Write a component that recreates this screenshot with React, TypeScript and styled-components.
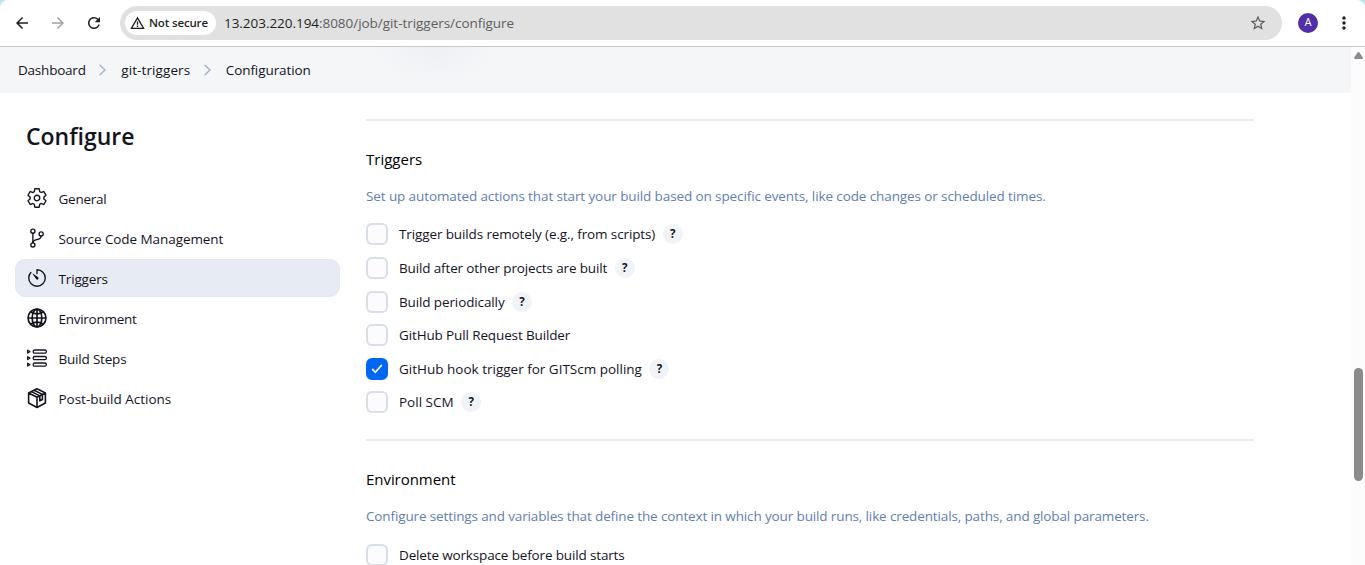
import React from "react";
import styled, { createGlobalStyle } from "styled-components";
import { IoSettingsOutline, IoGitBranchOutline, IoTimerOutline, IoGlobeOutline } from "react-icons/io5";
import { MdArrowBack, MdArrowForward, MdRefresh, MdStarBorder, MdMoreVert } from "react-icons/md";

const GlobalStyle = createGlobalStyle`
  * { box-sizing: border-box; }
  html, body, #root { margin: 0; height: 100%; }
  body { background: #fff; overflow: hidden; color: #14141f; font: 13.5px/20px "Open Sans", "Noto Sans", sans-serif; }
  svg { display: block; flex: none; }
  h1, h2, p { margin: 0; font-weight: 400; }
`;

/* Text run with its tracking in px */
const T = styled.span<{ $ls?: number }>`
  white-space: nowrap;
  letter-spacing: ${(p) => p.$ls ?? 0}px;
`;

const Window = styled.div`
  height: 565px;
  display: flex;
  flex-direction: column;
  background: #b9e6f0;
`;
const Toolbar = styled.header`
  flex: none;
  height: 47px;
  display: flex;
  align-items: center;
  padding: 0 11px 0 13px;
  background: #fff;
  border-bottom: 1px solid #c9c9c9;
  border-radius: 8px 8px 0 0;
`;
const NavButton = styled.span<{ $muted?: boolean }>`
  display: flex;
  width: 18px;
  margin-right: 18px;
  color: ${(p) => (p.$muted ? "#a3a3a3" : "#1f1f1f")};
`;
const AddressBar = styled.div`
  flex: 1;
  height: 34px;
  margin-left: -1px;
  padding: 0 15px 0 5px;
  display: flex;
  align-items: center;
  border-radius: 17px;
  background: #e1e1e1;
`;
const SecurityChip = styled.div`
  width: 91px;
  height: 24px;
  padding-left: 5px;
  display: flex;
  align-items: center;
  gap: 4px;
  border-radius: 12px;
  background: #fff;
  color: #1f1f1f;
  font-size: 11.5px;
  font-weight: 600;
`;
const Url = styled.div`
  flex: 1;
  margin-left: 8px;
  color: #5e5e5e;
`;
const Host = styled.span`
  color: #1f1f1f;
`;
const Avatar = styled.div`
  width: 20px;
  height: 20px;
  margin: 0 16px;
  border-radius: 50%;
  background: #512da8;
  color: #fff;
  font: 11px/20px Roboto, sans-serif;
  text-align: center;
`;
const Viewport = styled.div`
  flex: 1;
  min-height: 0;
  display: flex;
  background: #fff;
`;
const Page = styled.div`
  flex: 1;
  display: flex;
  flex-direction: column;
  min-width: 0;
`;
const Breadcrumbs = styled.nav`
  flex: none;
  height: 46px;
  padding: 0 0 1px 18px;
  display: flex;
  align-items: center;
  background: radial-gradient(ellipse 62px 38px at 435px 0, #eff0f4, rgba(239, 240, 244, 0)), #f5f6f8;
`;
const Chevron = styled.svg`
  width: 7px;
  height: 12px;
  margin: 1px 15px 0 13.5px;
`;
const Columns = styled.div`
  flex: 1;
  min-height: 0;
  display: flex;
`;
const Sidebar = styled.aside`
  width: 366px;
  padding: 25px 26px 0 15px;
`;
const Title = styled.h1`
  margin: 0 0 25px 11px;
  font: 600 23px/36px "Open Sans", "Noto Sans", sans-serif;
`;
const NavItem = styled.a<{ $active?: boolean }>`
  display: flex;
  align-items: center;
  height: 38px;
  width: 325px;
  margin-bottom: 2px;
  padding: 1px 0 0 10px;
  gap: 10.5px;
  border-radius: 10px;
  border: 1px solid ${(p) => (p.$active ? "#e4e8f1" : "transparent")};
  background: ${(p) => (p.$active ? "#e7ebf4" : "transparent")};
  & > svg { width: 22px; height: 22px; margin-top: -2px; }
`;
const BoldGlobe = styled(IoGlobeOutline)`
  path { stroke-width: 40px; }
`;
const Main = styled.main`
  width: 888px;
  padding-top: 26px;
  overflow: hidden;
`;
const Section = styled.section`
  height: 320px;
  padding-top: 26px;
  border-top: 2px solid #e8ecf2;
`;
const SectionTitle = styled.h2`
  font-size: 15px;
  line-height: 24px;
  color: #000;
`;
const Description = styled.p<{ $after?: number }>`
  margin: 15px 0 ${(p) => p.$after ?? 17}px;
  line-height: 20px;
  color: #6180b0;
`;
const Option = styled.label<{ $gap: number }>`
  display: flex;
  align-items: center;
  height: 22px;
  margin-bottom: ${(p) => p.$gap}px;
`;
const Box = styled.span<{ $checked?: boolean }>`
  width: 22px;
  height: 22px;
  margin-right: 11px;
  display: flex;
  align-items: center;
  justify-content: center;
  border-radius: 6px;
  border: 2px solid ${(p) => (p.$checked ? "#0067f5" : "#d8deea")};
  background: ${(p) => (p.$checked ? "#0067f5" : "#fcfcfe")};
`;
const Help = styled.span`
  width: 20px;
  height: 20px;
  margin-left: 7.5px;
  border-radius: 50%;
  background: #f0f4f8;
  font: 700 11.5px/19px "Open Sans", sans-serif;
  text-align: center;
`;
const ScrollTrack = styled.div`
  width: 14px;
  padding: 5px 0 0 3px;
  background: #fcfcfc;
`;
const ScrollThumb = styled.div`
  width: 9px;
  height: 113px;
  margin-top: 309px;
  border-radius: 5px;
  background: #8b8b8b;
`;

const Separator = () => (
  <Chevron viewBox="0 0 7 12" fill="none" stroke="#9bb0d3" strokeWidth="1.4" strokeLinecap="round" strokeLinejoin="round">
    <path d="M1 1.2 6 6 1 10.8" />
  </Chevron>
);

const StepsIcon = () => (
  <svg viewBox="0 0 22 22" fill="none" stroke="currentColor" strokeWidth="1.3" strokeLinejoin="round">
    {[4.6, 11.1, 17.6].map((y) => (
      <g key={y}>
        <path d={`M1.6 ${y - 1.4} 3.9 ${y} 1.6 ${y + 1.4}Z`} />
        <rect x="7.2" y={y - 1.6} width="13.2" height="3.2" rx="1.5" />
      </g>
    ))}
  </svg>
);

const PackageIcon = () => (
  <svg viewBox="0 0 22 22" fill="none" stroke="currentColor" strokeWidth="1.6" strokeLinejoin="round" strokeLinecap="round">
    <path d="M11 1.8 19.4 6v10L11 20.5 2.6 16V6ZM2.6 6 11 10.2 19.4 6M11 10.2v10.3" />
    <path d="m5.4 4.6 8.4 4.3v5l2.6-1.4V7.4L8.1 3.3" />
  </svg>
);

const navItems = [
  { label: "General", ls: -0.25, icon: <IoSettingsOutline /> },
  { label: "Source Code Management", ls: -0.07, icon: <IoGitBranchOutline /> },
  { label: "Triggers", ls: -0.15, icon: <IoTimerOutline />, active: true },
  { label: "Environment", ls: -0.27, icon: <BoldGlobe /> },
  { label: "Build Steps", ls: -0.2, icon: <StepsIcon /> },
  { label: "Post-build Actions", ls: -0.02, icon: <PackageIcon /> },
];

type Opt = { label: string; ls: number; help?: boolean; checked?: boolean; gap: number };
const triggers: Opt[] = [
  { label: "Trigger builds remotely (e.g., from scripts)", ls: -0.12, help: true, gap: 12 },
  { label: "Build after other projects are built", ls: -0.14, help: true, gap: 12 },
  { label: "Build periodically", ls: -0.12, help: true, gap: 11 },
  { label: "GitHub Pull Request Builder", ls: -0.13, gap: 12 },
  { label: "GitHub hook trigger for GITScm polling", ls: 0, help: true, checked: true, gap: 11 },
  { label: "Poll SCM", ls: 0, help: true, gap: 0 },
];
const environment: Opt[] = [{ label: "Delete workspace before build starts", ls: -0.15, gap: 0 }];

const Options = ({ items }: { items: Opt[] }) => (
  <>
    {items.map((o) => (
      <Option key={o.label} $gap={o.gap}>
        <Box $checked={o.checked}>
          {o.checked && (
            <svg width="12" height="10" viewBox="0 0 12 10" fill="none" stroke="#fff" strokeWidth="1.7" strokeLinecap="round" strokeLinejoin="round">
              <path d="m1.6 5.4 2.8 2.9L10.4 1.4" />
            </svg>
          )}
        </Box>
        <T $ls={o.ls}>{o.label}</T>
        {o.help && <Help>?</Help>}
      </Option>
    ))}
  </>
);

export default function App() {
  return (
    <Window>
      <GlobalStyle />
      <Toolbar>
        <NavButton><MdArrowBack size={18} /></NavButton>
        <NavButton $muted><MdArrowForward size={18} /></NavButton>
        <NavButton><MdRefresh size={18} /></NavButton>
        <AddressBar>
          <SecurityChip>
            <svg width="15" height="14" viewBox="0 0 15 14" fill="none" stroke="currentColor" strokeWidth="1.3">
              <path d="M7.5 1.8 13.6 12.3H1.4ZM7.5 5.4v3.4M7.5 9.6v1.4" />
            </svg>
            <T $ls={-0.15}>Not secure</T>
          </SecurityChip>
          <Url><T $ls={-0.04}><Host>13.203.220.194</Host>:8080/job/git-triggers/configure</T></Url>
          <MdStarBorder size={18} color="#5a5a5a" />
        </AddressBar>
        <Avatar>A</Avatar>
        <MdMoreVert size={20} color="#1f1f1f" />
      </Toolbar>
      <Viewport>
        <Page>
          <Breadcrumbs>
            <T $ls={-0.22}>Dashboard</T><Separator /><T $ls={0.1}>git-triggers</T><Separator /><T $ls={-0.08}>Configuration</T>
          </Breadcrumbs>
          <Columns>
            <Sidebar>
              <Title><T>Configure</T></Title>
              {navItems.map((n) => (
                <NavItem key={n.label} $active={n.active}>{n.icon}<T $ls={n.ls}>{n.label}</T></NavItem>
              ))}
            </Sidebar>
            <Main>
              <Section>
                <SectionTitle><T>Triggers</T></SectionTitle>
                <Description><T $ls={-0.105}>Set up automated actions that start your build based on specific events, like code changes or scheduled times.</T></Description>
                <Options items={triggers} />
              </Section>
              <Section>
                <SectionTitle><T $ls={-0.05}>Environment</T></SectionTitle>
                <Description $after={18}><T $ls={-0.13}>Configure settings and variables that define the context in which your build runs, like credentials, paths, and global parameters.</T></Description>
                <Options items={environment} />
              </Section>
            </Main>
          </Columns>
        </Page>
        <ScrollTrack>
          <svg width="9" height="7" viewBox="0 0 9 7" fill="#8b8b8b"><path d="M3.4.8Q4.5-.6 5.6.8L8.8 5.4Q9.2 7 8 7H1Q-.2 7 .2 5.4Z" /></svg>
          <ScrollThumb />
        </ScrollTrack>
      </Viewport>
    </Window>
  );
}
